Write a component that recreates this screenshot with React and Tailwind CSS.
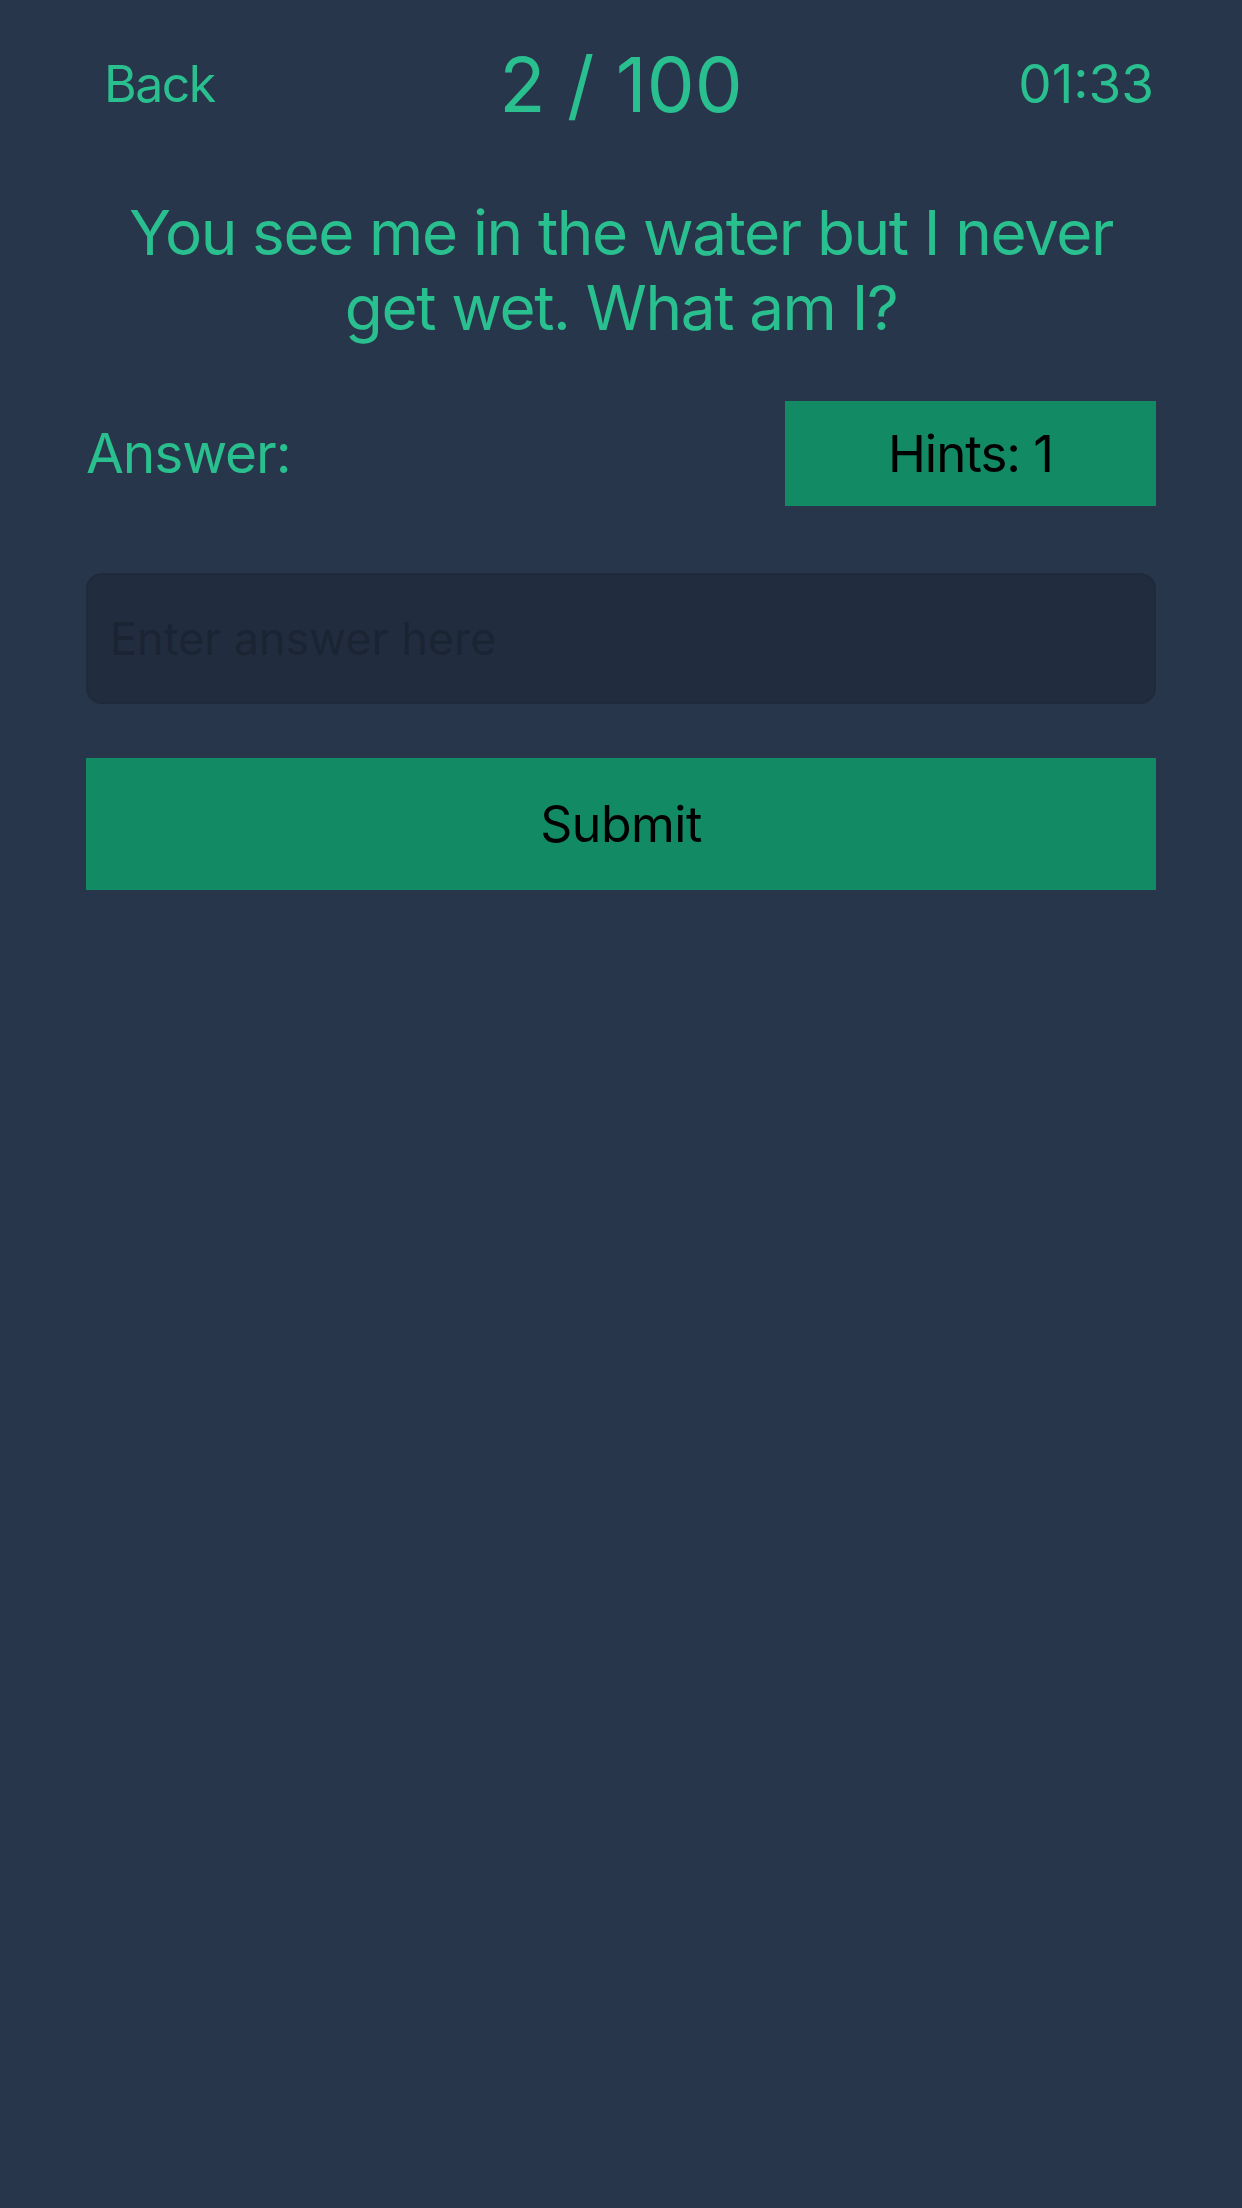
import React from "react";

export default function App() {
  return (
    <div className="min-h-screen w-full bg-[#27364a] pt-[42px] font-['Inter','Liberation_Sans',sans-serif] text-[#2abf8f]">
      <div className="grid h-[84px] grid-cols-[1fr_auto_1fr] items-center px-[88px]">
        <div className="justify-self-start pl-[16px] text-[50px] leading-none tracking-[-0.03em]">Back</div>
        <div className="text-[76px] leading-none">2 / 100</div>
        <div className="justify-self-end text-[53px] leading-none">01:33</div>
      </div>

      <div className="mt-[69px] px-[86px] text-center text-[62px] leading-[75px] tracking-[-0.022em]">
        You see me in the water but I never
        <br />
        get wet. What am I?
      </div>

      <div className="mt-[56px] flex items-center justify-between px-[86px]">
        <div className="text-[55px] leading-none tracking-[-0.02em]">Answer:</div>
        <button className="flex h-[105px] w-[371px] items-center justify-center bg-[#128a63] text-[51px] leading-none tracking-[-0.02em] text-black">
          Hints: 1
        </button>
      </div>

      <div className="mt-[67px] px-[86px]">
        <input
          type="text"
          placeholder="Enter answer here"
          className="h-[131px] w-full rounded-[16px] border-2 border-[#1f2a3a] bg-[#212d3e] pl-[22px] text-[45px] text-[#2abf8f] outline-none placeholder:text-[#1b2433]"
        />
      </div>

      <div className="mt-[54px] px-[86px]">
        <button className="flex h-[132px] w-full items-center justify-center bg-[#128a63] text-[50px] leading-none tracking-[-0.01em] text-black">
          Submit
        </button>
      </div>
    </div>
  );
}
